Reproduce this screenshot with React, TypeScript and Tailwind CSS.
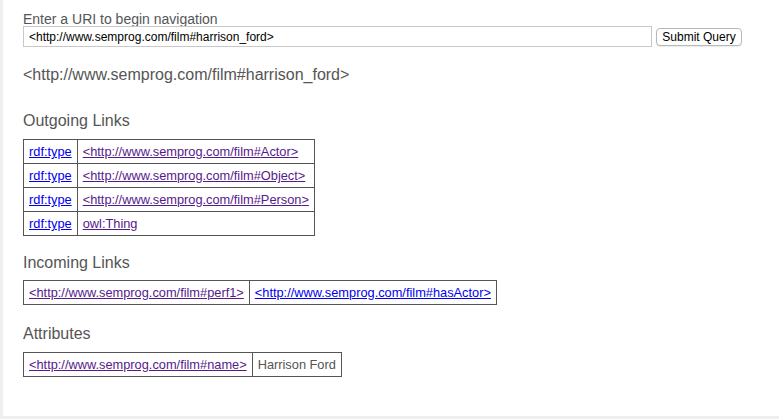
import React from "react";

const font = { fontFamily: '"Liberation Sans", Arial, Helvetica, sans-serif' };

const blue = "text-[#0000ee] underline";
const purple = "text-[#551a8b] underline";

export default function App() {
  return (
    <div className="w-[779px] h-[419px] bg-[#eeeeee] flex" style={font}>
      <div className="ml-[3px] mb-[3px] flex-1 bg-white pl-[20px] pt-[11px] text-[#555555]">
        <div className="text-[14px] leading-[16px]">Enter a URI to begin navigation</div>
        <div className="flex items-center mt-[-1px]">
          <input
            className="w-[629px] h-[21px] border border-[#c8c8c8] px-[5px] text-[12px] text-black outline-none"
            defaultValue="<http://www.semprog.com/film#harrison_ford>"
            style={font}
          />
          <button className="ml-[4px] h-[18px] w-[86px] border border-[#b8b8b8] rounded-[4px] bg-white text-[12px] text-black leading-[16px] shadow-[0_1px_1px_rgba(0,0,0,0.08)]">
            Submit Query
          </button>
        </div>
        <div className="mt-[18px] text-[16px] leading-[20px]">&lt;http://www.semprog.com/film#harrison_ford&gt;</div>

        <div className="mt-[26px] text-[16px] leading-[20px]">Outgoing Links</div>
        <table className="mt-[8px] border-collapse text-[12.8px] leading-[15px]">
          <tbody>
            {["Actor", "Object", "Person"].map((n) => (
              <tr key={n} className="h-[24px]">
                <td className="border border-[#555555] px-[5px] py-0"><a className={blue}>rdf:type</a></td>
                <td className="border border-[#555555] px-[5px] py-0"><a className={purple}>&lt;http://www.semprog.com/film#{n}&gt;</a></td>
              </tr>
            ))}
            <tr className="h-[24px]">
              <td className="border border-[#555555] px-[5px] py-0"><a className={blue}>rdf:type</a></td>
              <td className="border border-[#555555] px-[5px] py-0"><a className={purple}>owl:Thing</a></td>
            </tr>
          </tbody>
        </table>

        <div className="mt-[17px] text-[16px] leading-[20px]">Incoming Links</div>
        <table className="mt-[7px] border-collapse text-[12.8px] leading-[15px]">
          <tbody>
            <tr className="h-[24px]">
              <td className="border border-[#555555] px-[5px] py-0"><a className={purple}>&lt;http://www.semprog.com/film#perf1&gt;</a></td>
              <td className="border border-[#555555] px-[5px] py-0"><a className={blue}>&lt;http://www.semprog.com/film#hasActor&gt;</a></td>
            </tr>
          </tbody>
        </table>

        <div className="mt-[19px] text-[16px] leading-[20px]">Attributes</div>
        <table className="mt-[8px] border-collapse text-[12.8px] leading-[15px]">
          <tbody>
            <tr className="h-[24px]">
              <td className="border border-[#555555] px-[5px] py-0"><a className={purple}>&lt;http://www.semprog.com/film#name&gt;</a></td>
              <td className="border border-[#555555] px-[5px] py-0">Harrison Ford</td>
            </tr>
          </tbody>
        </table>
      </div>
    </div>
  );
}
